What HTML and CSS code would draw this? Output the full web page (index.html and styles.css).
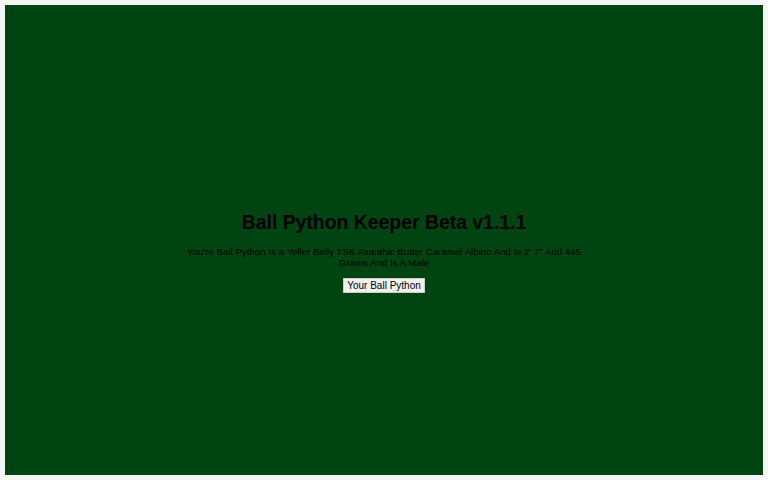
FILE: index.html
```html
<!DOCTYPE html>
<html>
<head>
<meta charset="utf-8">
<link rel="stylesheet" href="styles.css">
</head>
<body>
<main class="screen">
  <h1 class="title">Ball Python Keeper Beta v1.1.1</h1>
  <p class="desc">You're Ball Python Is a Yeller Belly TSK Axanthic Butter Caramel Albino And Is 2' 7" And 445 Grams And Is A Male</p>
  <button class="btn">Your Ball Python</button>
</main>
</body>
</html>
```
FILE: styles.css
```css
html, body { margin: 0; padding: 0; }
body {
  background: #f4f6f4;
  padding: 5px;
  height: 480px;
  box-sizing: border-box;
  font-family: "Liberation Sans", Arial, sans-serif;
}
.screen {
  background: #004411;
  height: 470px;
  box-sizing: border-box;
  padding-top: 24px;
  display: flex;
  flex-direction: column;
  align-items: center;
  justify-content: center;
  text-align: center;
  color: #000;
}
.title {
  font-size: 19.4px;
  font-weight: bold;
  margin: 0 0 12px;
}
.desc {
  font-size: 9.7px;
  width: 410px;
  line-height: 11px;
  margin: 0 0 10px;
}
.btn {
  font-family: "Liberation Sans", Arial, sans-serif;
  font-size: 10px;
  background: #f0f0f0;
  border: 1px solid #ccc;
  padding: 0 3px;
  height: 15px;
  color: #000;
}
```
